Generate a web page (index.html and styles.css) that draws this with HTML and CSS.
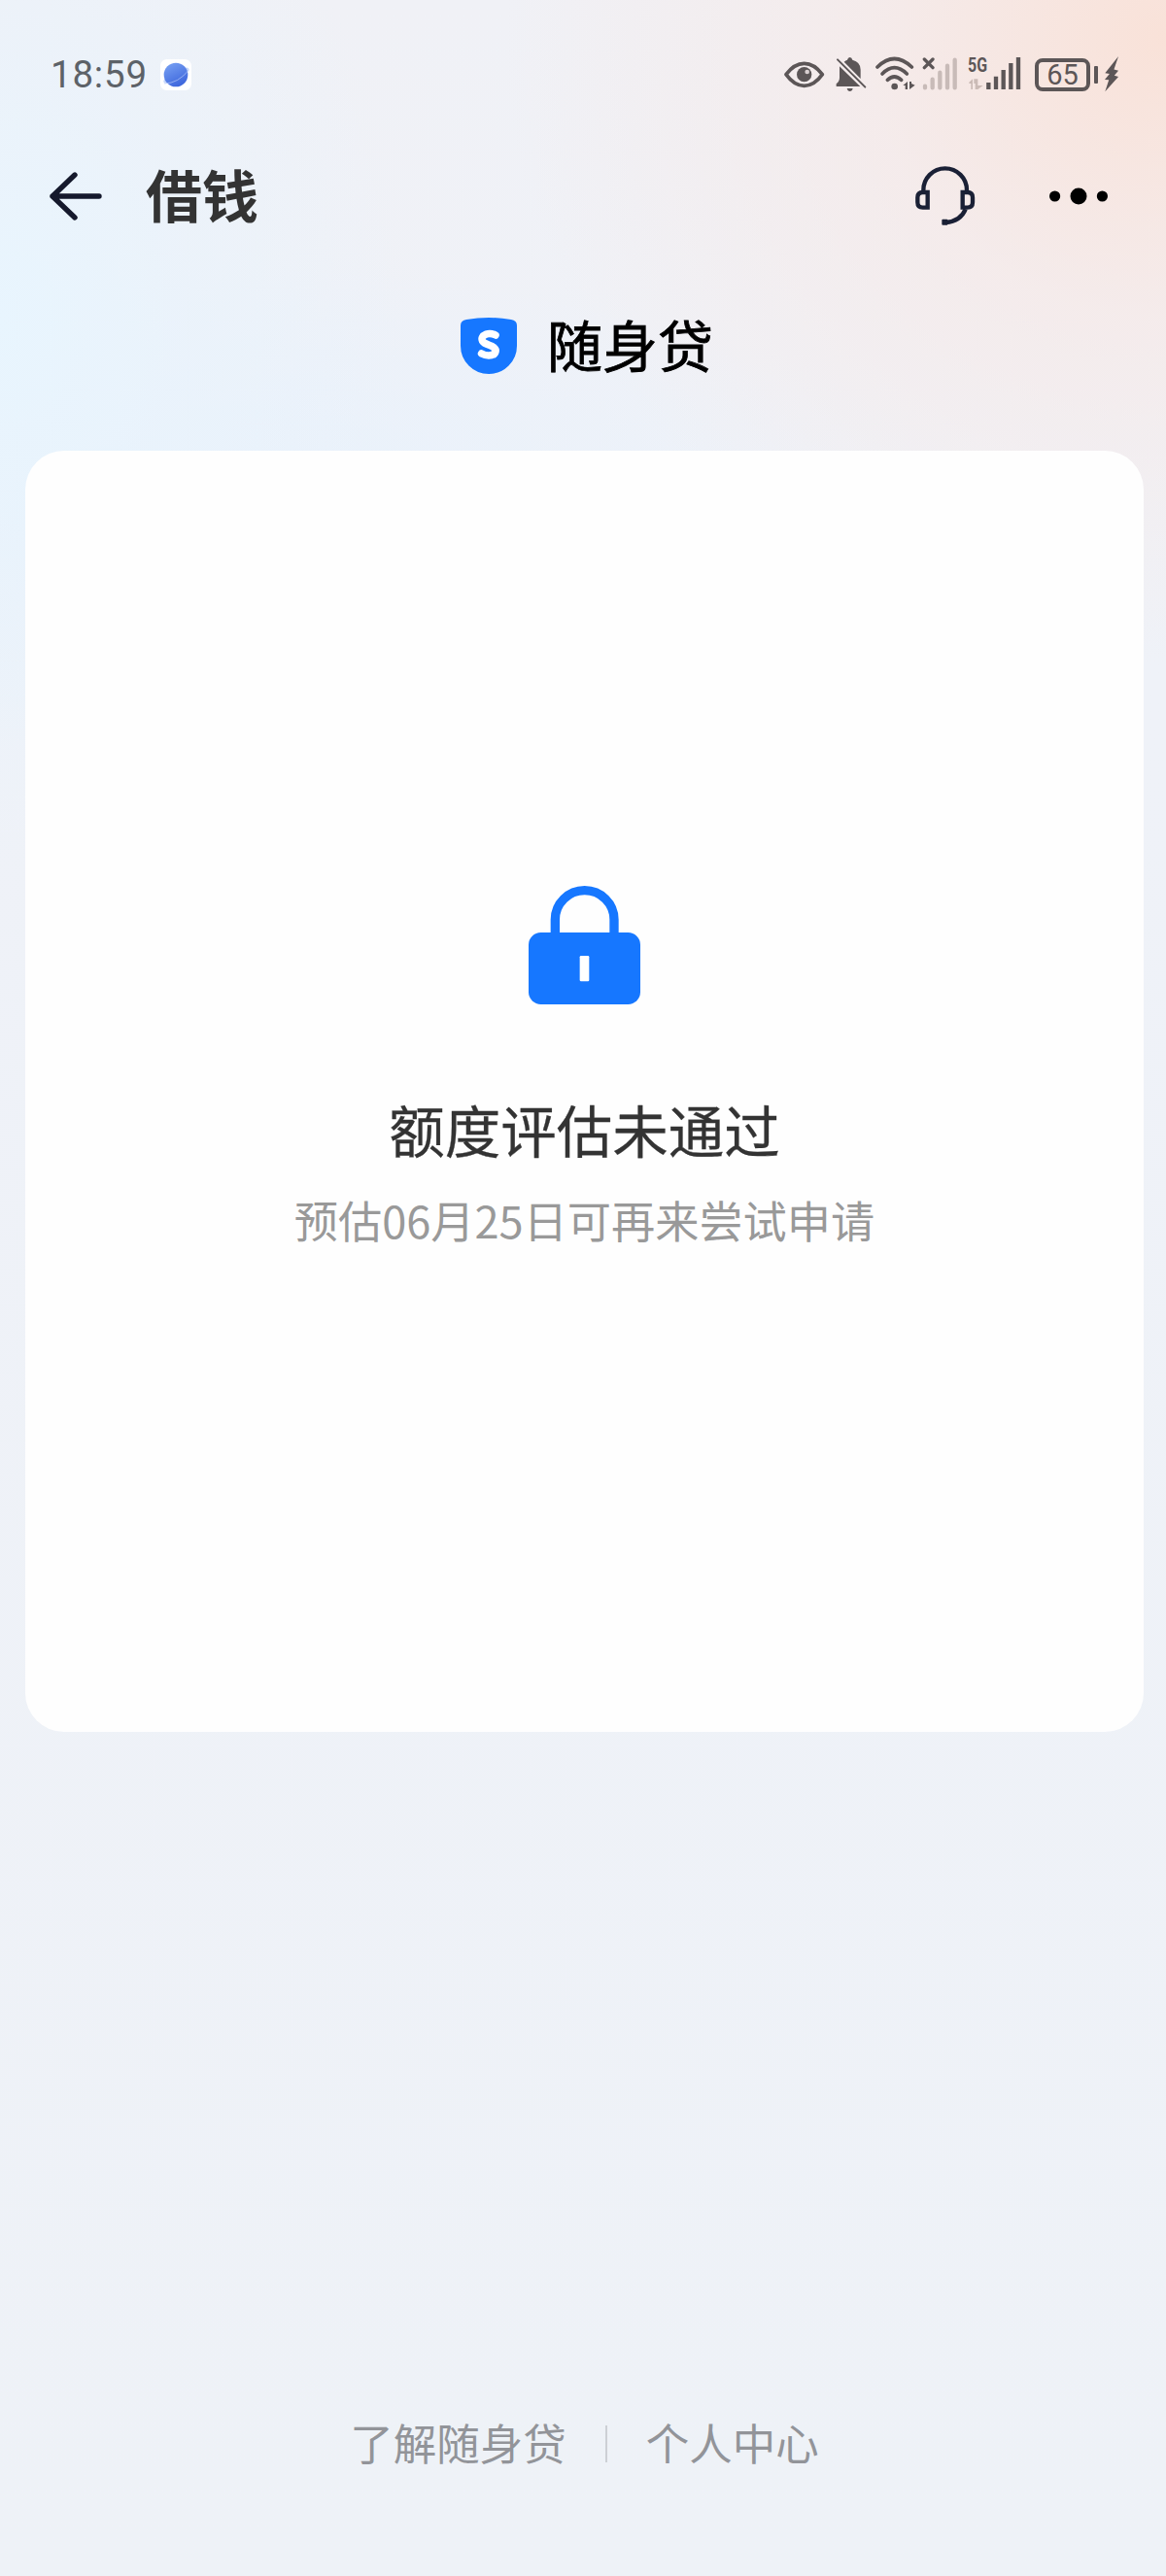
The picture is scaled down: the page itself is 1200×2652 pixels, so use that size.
FILE: index.html
```html
<!DOCTYPE html>
<html lang="zh-CN">
<head>
    <meta charset="UTF-8">
    <meta name="viewport" content="width=device-width, initial-scale=1.0">
    <title>借钱</title>
    <link rel="stylesheet" href="styles.css">
</head>
<body>

<div class="page">
    <!-- Status bar -->
    <div class="status-bar">
        <span class="time">18:59</span>
        <svg class="app-badge" viewBox="0 0 96 96">
            <defs>
                <linearGradient id="planet" x1="0" y1="0" x2="0.5" y2="1">
                    <stop offset="0" stop-color="#7ba4f4"/>
                    <stop offset="1" stop-color="#3f68dd"/>
                </linearGradient>
            </defs>
            <rect width="96" height="96" rx="20" fill="#fff"/>
            <ellipse cx="49" cy="50" rx="44" ry="14" fill="#c5d7fa" transform="rotate(-29 49 50)"/>
            <circle cx="48" cy="48" r="37" fill="url(#planet)"/>
            <path d="M12 75Q55 75 89 32" fill="none" stroke="#b9ccfb" stroke-width="2"/>
        </svg>

        <div class="status-icons">
            <svg class="icon-eye" viewBox="0 0 126 120">
                <path d="M6 62Q31 28 62 28T118 62Q93 97 62 97T6 62Z" fill="none" stroke="currentColor" stroke-width="11" stroke-linejoin="round"/>
                <circle cx="62" cy="62" r="23" fill="currentColor"/>
                <circle cx="71" cy="54" r="7" fill="#d8cfd0"/>
            </svg>
            <svg class="icon-bell" viewBox="0 0 96 120">
                <path d="M12 37L76 99H2V91Q12 83 12 72ZM26 23Q31 19 36 17Q38 9 44 9T52 17Q77 23 77 47V75Z" fill="currentColor"/>
                <path d="M35 105H53Q51 114 44 114T35 105Z" fill="currentColor"/>
                <path d="M6 16L91 101" stroke="currentColor" stroke-width="6" stroke-linecap="round"/>
            </svg>
            <svg class="icon-wifi" viewBox="0 0 123 120">
                <g fill="none" stroke="currentColor" stroke-width="11" stroke-linecap="round">
                    <path d="M6 39Q58-12 112 39"/>
                    <path d="M21 60Q58 22 97 60"/>
                    <path d="M37 79Q58 59 80 79"/>
                </g>
                <circle cx="59" cy="99" r="10" fill="currentColor"/>
                <path d="M85 96L99 84V108H92V96ZM105 84H111V90L122 95L105 108Z" fill="currentColor"/>
            </svg>
            <svg class="icon-signal-off" viewBox="0 0 111 120">
                <g stroke="#c8bbb8" stroke-width="13" stroke-linecap="round">
                    <path d="M9 98V103M32 77V103M55 56V103M78 35V103M101 17V103"/>
                </g>
                <path d="M7 15L33 41M33 15L7 41" stroke="currentColor" stroke-width="10" stroke-linecap="round"/>
            </svg>
            <div class="signal-5g">
                <span class="network">5G</span>
                <svg viewBox="0 0 165 120">
                    <path d="M4 86L15 76V108H10V90H4ZM19 76H23V76H31V96H47L31 108H23V90H19Z" fill="#cbbbb6"/>
                    <g stroke="currentColor" stroke-width="13">
                        <path d="M64 87V108M87 68V108M110 48V108M133 27V108M156 9V108"/>
                    </g>
                </svg>
            </div>
            <div class="battery">65</div>
            <svg class="icon-bolt" viewBox="0 0 49 120">
                <path d="M46 5L4 58L18 60L3 78L16 79L4 116L46 69L33 65L46 50L32 46Z" fill="currentColor"/>
            </svg>
        </div>
    </div>

    <!-- Navigation -->
    <div class="nav">
        <svg class="icon-back" viewBox="0 0 54 50">
            <path d="M26 3L3 25L26 47M3 25H51" fill="none" stroke="#15192c" stroke-width="5.4" stroke-linecap="round" stroke-linejoin="round"/>
        </svg>
        <h1 class="title">借钱</h1>
        <svg class="icon-service" viewBox="0 0 186 184">
            <g fill="none" stroke="#1a2035" stroke-width="13">
                <path d="M25 78V73A67 67 0 0 1 159 73V78"/>
                <path d="M38 80V127H23Q7 127 7 111V96Q7 80 23 80ZM146 80V127H161Q177 127 177 111V96Q177 80 161 80Z"/>
                <path d="M155 132Q140 169 94 173"/>
            </g>
            <rect x="82" y="163" width="18" height="18" rx="3" fill="#1a2035"/>
        </svg>
        <svg class="icon-more" viewBox="0 0 60 18">
            <circle cx="5.6" cy="9" r="5.6"/>
            <circle cx="30" cy="9" r="8.5"/>
            <circle cx="54.4" cy="9" r="5.6"/>
        </svg>
    </div>

    <!-- Product name -->
    <div class="brand">
        <svg class="brand-logo" viewBox="0 0 58 58">
            <path d="M0 8Q0 3 6 2Q29-2 52 2Q58 3 58 8V29Q58 41 49.500 49.500Q41 58 29 58T8.500 49.500Q0 41 0 29Z" fill="#1677ff"/>
            <path d="M36 18Q31 15.500 26.500 17Q20.500 19.500 22.500 24Q24 26.500 30 28.500Q37 31 36 35Q35 39 29 39Q25 39 21.500 37" fill="none" stroke="#fff" stroke-width="7.5" stroke-linecap="round"/>
        </svg>
        <span>随身贷</span>
    </div>

    <!-- Result card -->
    <div class="card">
        <svg class="icon-lock" viewBox="0 0 345 366">
            <path d="M82 150V104A91 90 0 0 1 264 104V150" fill="none" stroke="#1677ff" stroke-width="28"/>
            <rect y="144" width="345" height="222" rx="38" fill="#1677ff"/>
            <rect x="158" y="216" width="29" height="79" rx="4" fill="#fff"/>
        </svg>
        <h2 class="result">额度评估未通过</h2>
        <p class="hint">预估06月25日可再来尝试申请</p>
    </div>

    <!-- Footer links -->
    <div class="footer">
        <span>了解随身贷</span>
        <span class="divider"></span>
        <span>个人中心</span>
    </div>
</div>

</body>
</html>
```
FILE: styles.css
```css
* {
    box-sizing: border-box;
}
body {
    margin: 0;
    font-family: "Noto Sans CJK SC", sans-serif;
}
svg {
    display: block;
    flex-shrink: 0;
}
.page {
    display: flex;
    flex-direction: column;
    width: 1200px;
    height: 2652px;
    padding: 0 23px 0 26px;
    background:
        radial-gradient(ellipse 680px 640px at 1200px 40px, rgba(250, 224, 213, 0.9), rgba(247, 232, 229, 0.65) 45%, rgba(243, 238, 240, 0) 100%),
        radial-gradient(ellipse 420px 560px at 0 330px, #e8f5fe, rgba(233, 243, 252, 0.6) 50%, rgba(239, 242, 247, 0) 100%),
        radial-gradient(ellipse 760px 260px at 200px 520px, #e8f2fc, rgba(239, 242, 247, 0)),
        linear-gradient(#f0f1f6, #eff2f8 700px, #eef2f7);
}

/* Status bar */
.status-bar {
    display: flex;
    align-items: center;
    height: 152px;
    padding: 0 25px 0 26px;
    color: #5c5657;
}
.time {
    width: 113px;
    padding-top: 2px;
    font: 38.5px/40px Roboto, sans-serif;
    letter-spacing: 0.8px;
    color: #5d6268;
}
.app-badge {
    width: 32px;
    height: 32px;
    margin-top: 2px;
}
.status-icons {
    display: flex;
    align-items: center;
    height: 40px;
    margin-left: auto;
}
.status-icons svg {
    height: 40px;
}
.icon-eye {
    width: 42px;
    margin-right: 11px;
}
.icon-bell {
    width: 32px;
    margin-right: 9px;
}
.icon-wifi {
    width: 41px;
    margin-right: 7px;
}
.icon-signal-off {
    width: 37px;
    margin-right: 10px;
}
.signal-5g {
    position: relative;
    width: 55px;
    margin-right: 14px;
}
.network {
    position: absolute;
    top: 2px;
    left: 0;
    font: bold 21px/18px Roboto, sans-serif;
    transform: scaleX(0.76);
    transform-origin: left;
}
.battery {
    position: relative;
    width: 57px;
    height: 34px;
    margin-top: 2px;
    margin-right: 14px;
    border: 4px solid currentColor;
    border-radius: 8px;
    font: 29px/27px Roboto, sans-serif;
    text-align: center;
}
.battery::after {
    content: "";
    position: absolute;
    top: 4px;
    right: -12px;
    width: 4px;
    height: 18px;
    border-radius: 1px;
    background: currentColor;
}
.icon-bolt {
    width: 16px;
}

/* Navigation */
.nav {
    display: flex;
    align-items: center;
    height: 100px;
    padding: 0 37px 0 25px;
}
.icon-back {
    width: 54px;
    height: 50px;
}
.title {
    margin: 0 auto 0 45px;
    padding-bottom: 7px;
    font-size: 58px;
    font-weight: 700;
    line-height: 84px;
    color: #333;
}
.icon-service {
    width: 62px;
    height: 62px;
    margin-right: 76px;
}
.icon-more {
    width: 60px;
    height: 18px;
}

/* Product name */
.brand {
    display: flex;
    align-items: center;
    justify-content: center;
    gap: 31px;
    height: 212px;
    padding: 0 0 4px 5px;
    font-size: 57px;
    line-height: 80px;
    color: #000;
    -webkit-text-stroke: 0.8px #000;
}
.brand span {
    padding-bottom: 6px;
}
.brand-logo {
    width: 58px;
    height: 58px;
}

/* Result card */
.card {
    display: flex;
    flex-direction: column;
    align-items: center;
    height: 1319px;
    padding-top: 448px;
    border-radius: 40px;
    background: #fefefe;
}
.icon-lock {
    width: 115px;
    height: 122px;
}
.result {
    margin: 86px 0 0;
    font-size: 57.5px;
    font-weight: 400;
    line-height: 84px;
    color: #333;
    -webkit-text-stroke: 0.3px #333;
}
.hint {
    margin: 20px 0 0;
    font-size: 45.2px;
    line-height: 64px;
    color: #999;
}

/* Footer links */
.footer {
    display: flex;
    align-items: center;
    justify-content: center;
    gap: 40px;
    margin-top: auto;
    padding-bottom: 106px;
    font-size: 44.5px;
    line-height: 64px;
    color: #929499;
}
.divider {
    width: 2px;
    height: 38px;
    margin-top: 4px;
    background: #cdd0d5;
}
```
